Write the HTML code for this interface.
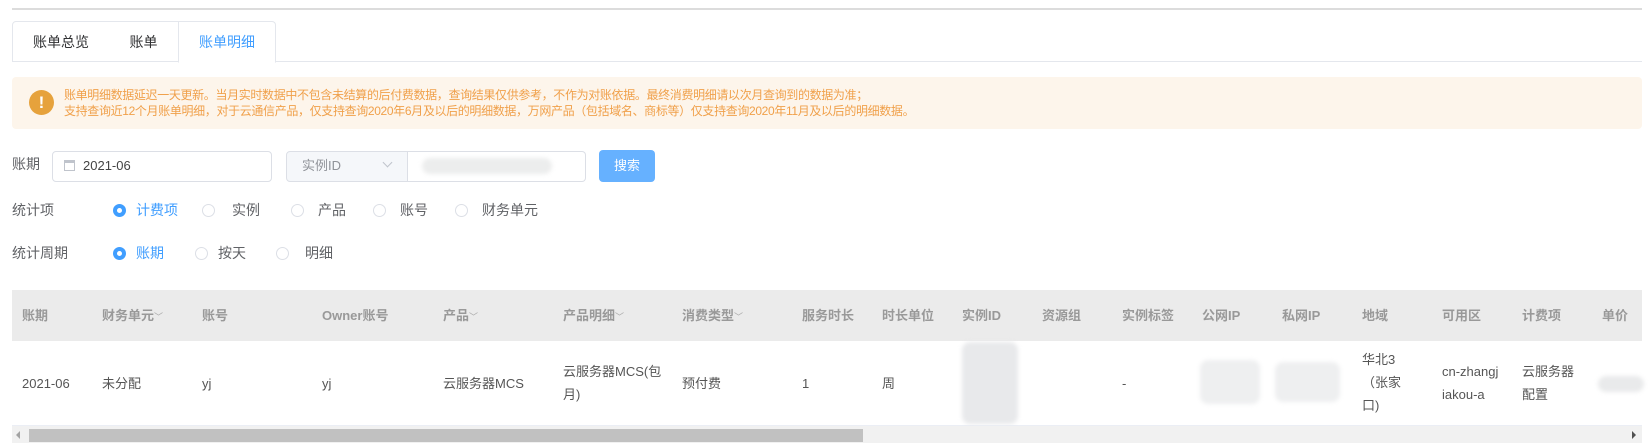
<!DOCTYPE html>
<html><head><meta charset="utf-8"><style>
*{margin:0;padding:0;box-sizing:border-box}
body{width:1649px;height:443px;overflow:hidden;background:#fff;font-family:"Liberation Sans","Noto Sans CJK SC",sans-serif;color:#333;position:relative}
.a{position:absolute;white-space:nowrap}
.tab{position:absolute;top:21px;height:41px;border:1px solid #e4e7ed;font-size:14px;line-height:40px;text-align:center;color:#303133;background:#fff}
.r{position:absolute;width:13px;height:13px;border:1px solid #dcdfe6;border-radius:50%;background:#fff}
.r.on{border:4px solid #409eff}
.lbl{font-size:13px;color:#606266}
.th{position:absolute;top:290px;line-height:51px;font-size:13px;font-weight:bold;color:#999;white-space:nowrap}
.td{position:absolute;font-size:13px;color:#555;line-height:23px;white-space:nowrap}
.car{font-size:9px;font-weight:normal;color:#aaa}
.blur{position:absolute;background:#e8e9eb;filter:blur(2px);border-radius:8px}
</style></head><body>
<div class="a" style="left:12px;top:8px;width:1630px;height:2px;background:#dcdcdc"></div>
<div class="a" style="left:12px;top:61px;width:1630px;height:1px;background:#e4e7ed"></div>
<div class="tab" style="left:12px;width:98px;border-radius:4px 0 0 0">账单总览</div>
<div class="tab" style="left:109px;width:70px;border-left:none">账单</div>
<div class="tab" style="left:178px;width:98px;color:#409eff;border-bottom-color:#fff;border-radius:0 4px 0 0;height:42px">账单明细</div>

<div class="a" style="left:12px;top:77px;width:1630px;height:52px;background:#fdf5eb;border-radius:4px"></div>
<div class="a" style="left:29px;top:90px;width:25px;height:25px;border-radius:50%;background:#e6a23c;color:#fff;font-weight:bold;font-size:17px;line-height:25px;text-align:center">!</div>
<div class="a" style="left:64px;top:87px;font-size:12px;line-height:16px;color:#f0a04a;letter-spacing:-0.35px">账单明细数据延迟一天更新。当月实时数据中不包含未结算的后付费数据，查询结果仅供参考，不作为对账依据。最终消费明细请以次月查询到的数据为准；<br>支持查询近12个月账单明细，对于云通信产品，仅支持查询2020年6月及以后的明细数据，万网产品（包括域名、商标等）仅支持查询2020年11月及以后的明细数据。</div>

<div class="a lbl" style="left:12px;top:155px;line-height:18px;font-size:14px">账期</div>
<div class="a" style="left:52px;top:151px;width:220px;height:31px;border:1px solid #dcdfe6;border-radius:4px"></div>
<div class="a" style="left:64px;top:160px;width:11px;height:11px;border:1px solid #c0c4cc;border-top-width:3px"></div>
<div class="a" style="left:83px;top:157px;font-size:13px;color:#444;line-height:18px">2021-06</div>
<div class="a" style="left:286px;top:151px;width:122px;height:31px;border:1px solid #dcdfe6;border-radius:4px 0 0 4px;background:#f5f7fa"></div>
<div class="a" style="left:302px;top:157px;font-size:13px;color:#909399;line-height:18px">实例ID</div>
<div class="a" style="left:384px;top:159px;width:7px;height:7px;border-right:1px solid #c0c4cc;border-bottom:1px solid #c0c4cc;transform:rotate(45deg)"></div>
<div class="a" style="left:407px;top:151px;width:179px;height:31px;border:1px solid #dcdfe6;border-left:none;border-radius:0 4px 4px 0"></div>
<div class="blur" style="left:422px;top:158px;width:130px;height:16px;background:#eceded"></div>
<div class="a" style="left:599px;top:150px;width:56px;height:32px;background:#66b1ff;border-radius:4px;color:#fff;font-size:13px;line-height:32px;text-align:center">搜索</div>

<div class="a lbl" style="left:12px;top:201px;line-height:18px;font-size:14px">统计项</div>
<div class="r on" style="left:113px;top:204px"></div><div class="a" style="left:136px;top:201px;font-size:14px;color:#409eff;line-height:18px">计费项</div>
<div class="r" style="left:202px;top:204px"></div><div class="a lbl" style="left:232px;top:201px;font-size:14px;line-height:18px">实例</div>
<div class="r" style="left:291px;top:204px"></div><div class="a lbl" style="left:318px;top:201px;font-size:14px;line-height:18px">产品</div>
<div class="r" style="left:373px;top:204px"></div><div class="a lbl" style="left:400px;top:201px;font-size:14px;line-height:18px">账号</div>
<div class="r" style="left:455px;top:204px"></div><div class="a lbl" style="left:482px;top:201px;font-size:14px;line-height:18px">财务单元</div>

<div class="a lbl" style="left:12px;top:244px;line-height:18px;font-size:14px">统计周期</div>
<div class="r on" style="left:113px;top:247px"></div><div class="a" style="left:136px;top:244px;font-size:14px;color:#409eff;line-height:18px">账期</div>
<div class="r" style="left:195px;top:247px"></div><div class="a lbl" style="left:218px;top:244px;font-size:14px;line-height:18px">按天</div>
<div class="r" style="left:276px;top:247px"></div><div class="a lbl" style="left:305px;top:244px;font-size:14px;line-height:18px">明细</div>

<div class="a" style="left:12px;top:290px;width:1630px;height:51px;background:#ebebeb"></div>
<div class="th" style="left:22px">账期</div>
<div class="th" style="left:102px">财务单元<span class="car">﹀</span></div>
<div class="th" style="left:202px">账号</div>
<div class="th" style="left:322px">Owner账号</div>
<div class="th" style="left:443px">产品<span class="car">﹀</span></div>
<div class="th" style="left:563px">产品明细<span class="car">﹀</span></div>
<div class="th" style="left:682px">消费类型<span class="car">﹀</span></div>
<div class="th" style="left:802px">服务时长</div>
<div class="th" style="left:882px">时长单位</div>
<div class="th" style="left:962px">实例ID</div>
<div class="th" style="left:1042px">资源组</div>
<div class="th" style="left:1122px">实例标签</div>
<div class="th" style="left:1202px">公网IP</div>
<div class="th" style="left:1282px">私网IP</div>
<div class="th" style="left:1362px">地域</div>
<div class="th" style="left:1442px">可用区</div>
<div class="th" style="left:1522px">计费项</div>
<div class="th" style="left:1602px">单价</div>

<div class="a" style="left:12px;top:425px;width:1630px;height:1px;background:#ebeef5"></div>
<div class="td" style="left:22px;top:372px">2021-06</div>
<div class="td" style="left:102px;top:372px">未分配</div>
<div class="td" style="left:202px;top:372px">yj</div>
<div class="td" style="left:322px;top:372px">yj</div>
<div class="td" style="left:443px;top:372px">云服务器MCS</div>
<div class="td" style="left:563px;top:360px">云服务器MCS(包<br>月)</div>
<div class="td" style="left:682px;top:372px">预付费</div>
<div class="td" style="left:802px;top:372px">1</div>
<div class="td" style="left:882px;top:372px">周</div>
<div class="blur" style="left:962px;top:342px;width:56px;height:82px"></div>
<div class="td" style="left:1122px;top:372px">-</div>
<div class="blur" style="left:1200px;top:360px;width:60px;height:44px;background:#eeeff0"></div>
<div class="blur" style="left:1275px;top:362px;width:65px;height:40px;background:#eeeff0"></div>
<div class="td" style="left:1362px;top:348px">华北3<br>（张家<br>口)</div>
<div class="td" style="left:1442px;top:360px">cn-zhangj<br>iakou-a</div>
<div class="td" style="left:1522px;top:360px">云服务器<br>配置</div>
<div class="blur" style="left:1598px;top:376px;width:46px;height:16px;background:#e9eaeb"></div>

<div class="a" style="left:12px;top:426px;width:1630px;height:17px;background:#f1f1f1"></div>
<div class="a" style="left:29px;top:429px;width:834px;height:13px;background:#c1c1c1"></div>
<div class="a" style="left:16px;top:431px;width:0;height:0;border-top:4px solid transparent;border-bottom:4px solid transparent;border-right:4px solid #a3a3a3"></div>
<div class="a" style="left:1632px;top:431px;width:0;height:0;border-top:4px solid transparent;border-bottom:4px solid transparent;border-left:4px solid #505050"></div>
</body></html>
